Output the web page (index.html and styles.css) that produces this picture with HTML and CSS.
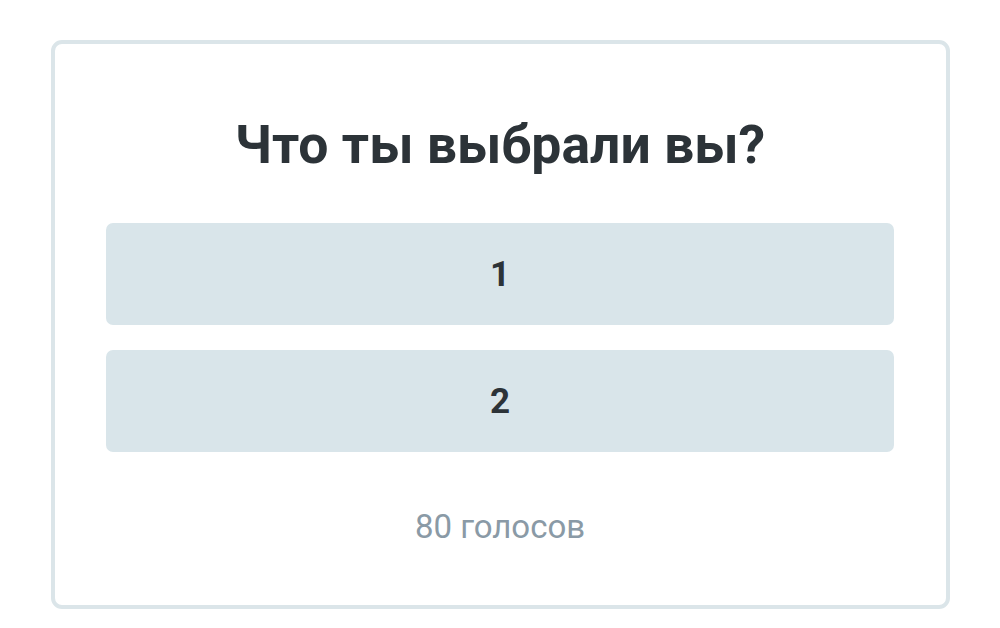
FILE: index.html
```html
<!DOCTYPE html>
<html lang="ru">
<head>
<meta charset="utf-8">
<link rel="stylesheet" href="styles.css">
</head>
<body>
<div class="page">
  <div class="poll">
    <h1 class="poll-title">Что ты выбрали вы?</h1>
    <div class="poll-options">
      <div class="poll-option">1</div>
      <div class="poll-option">2</div>
    </div>
    <div class="poll-footer">80 голосов</div>
  </div>
</div>
</body>
</html>
```
FILE: styles.css
```css
html, body {
  margin: 0;
  padding: 0;
  background: #ffffff;
  font-family: Roboto, "Noto Sans", Arial, sans-serif;
}
.page {
  padding: 40px 50px 21px 51px;
}
.poll {
  border: 4px solid #dbe5e9;
  border-radius: 11px;
  padding: 71px 52px 60px 51px;
  background: #ffffff;
}
.poll-title {
  margin: 0;
  text-align: center;
  font-size: 53.5px;
  line-height: 60px;
  font-weight: 700;
  color: #2c3338;
}
.poll-options {
  margin-top: 48px;
  display: flex;
  flex-direction: column;
  gap: 25px;
}
.poll-option {
  height: 102px;
  border-radius: 7px;
  background: #d9e5ea;
  display: flex;
  align-items: center;
  justify-content: center;
  font-size: 35px;
  font-weight: 700;
  color: #2c3338;
}
.poll-footer {
  margin-top: 57px;
  text-align: center;
  font-size: 33px;
  line-height: 36px;
  color: #8a9aa6;
}
```
